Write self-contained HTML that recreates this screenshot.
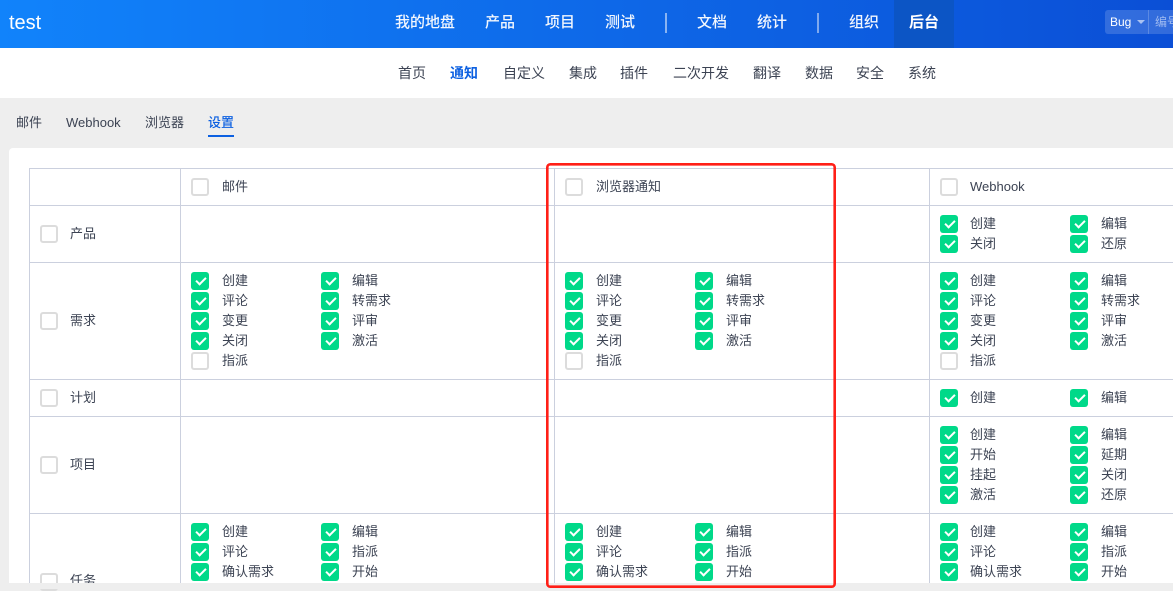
<!DOCTYPE html>
<html><head><meta charset="utf-8"><style>
*,*:before,*:after{box-sizing:border-box}
html,body{margin:0;padding:0}
body{width:1173px;height:589px;overflow:hidden;position:relative;background:#eee;font-family:"Liberation Sans","Noto Sans CJK SC",sans-serif;font-size:13px;color:#3c4353}
.abs,.n,.s,.t,.l,.g,.h,.v,.r{position:absolute}
#top{left:0;top:0;width:1173px;height:48px;background:linear-gradient(90deg,#1183fb,#0b4fd6)}
.n{top:12px;height:22px;line-height:22px;font-size:15px;font-weight:500;color:#fff;white-space:nowrap;opacity:.95}
.s{top:63px;height:20px;line-height:20px;font-size:14px;white-space:nowrap;color:#3c4353}
.t{top:113px;height:20px;line-height:20px;font-size:13px;white-space:nowrap;color:#3c4353}
.h{height:1px;background:#cbd0de;left:29px;width:1144px}
.v{width:1px;background:#cbd0de;top:168px;height:415px}
.l{white-space:nowrap;height:20px;line-height:20px}
.g{width:262px}
.g a{float:left;position:relative;width:130px;height:20px;line-height:19px;padding-left:31px;white-space:nowrap}
.g.w a:nth-child(odd){padding-left:30px}
.k:before,.u:before,.b{content:"";position:absolute;left:0;top:1px;width:18px;height:18px;border-radius:3px}
.k:before{background:#00d989}
.k:after{content:"";position:absolute;left:4.5px;top:5.5px;width:10px;height:6px;border-left:2px solid #fff;border-bottom:2px solid #fff;transform:rotate(-45deg)}
.u:before,.b{background:#fff;border:2px solid #dcdcdc}
.b{position:absolute;top:auto}
</style></head><body>
<div class="abs" id="top"></div>
<div class="abs" style="left:9px;top:9px;font-size:20px;line-height:28px;color:#fff">test</div>
<span class="n" style="left:395px">我的地盘</span>
<span class="n" style="left:485px">产品</span>
<span class="n" style="left:545px">项目</span>
<span class="n" style="left:605px">测试</span>
<div class="abs" style="left:665px;top:13px;width:2px;height:20px;background:#8ab4f2"></div>
<span class="n" style="left:697px">文档</span>
<span class="n" style="left:757px">统计</span>
<div class="abs" style="left:817px;top:13px;width:2px;height:20px;background:#7fa9ee"></div>
<span class="n" style="left:849px">组织</span>
<div class="abs" style="left:894px;top:0;width:60px;height:48px;background:#0c55c5"></div>
<span class="n" style="left:909px;font-weight:700;opacity:1">后台</span>
<div class="abs" style="left:1105px;top:10px;width:68px;height:24px;border-radius:3px 0 0 3px;background:rgba(255,255,255,.16)"></div>
<div class="abs" style="left:1148px;top:10px;width:1px;height:24px;background:rgba(255,255,255,.2)"></div>
<div class="abs" style="left:1110px;top:12px;font-size:12px;line-height:20px;color:#fff">Bug</div>
<div class="abs" style="left:1137px;top:20px;width:0;height:0;border-left:4px solid transparent;border-right:4px solid transparent;border-top:4px solid #a9c2f2"></div>
<div class="abs" style="left:1155px;top:12px;font-size:12px;line-height:20px;color:#9db9f0;white-space:nowrap">编号</div>

<div class="abs" style="left:0;top:48px;width:1173px;height:50px;background:#fff"></div>
<span class="s" style="left:398px">首页</span>
<span class="s" style="left:450px;color:#0c60e1;font-weight:700">通知</span>
<span class="s" style="left:503px">自定义</span>
<span class="s" style="left:569px">集成</span>
<span class="s" style="left:620px">插件</span>
<span class="s" style="left:673px">二次开发</span>
<span class="s" style="left:753px">翻译</span>
<span class="s" style="left:805px">数据</span>
<span class="s" style="left:856px">安全</span>
<span class="s" style="left:908px">系统</span>

<span class="t" style="left:16px">邮件</span>
<span class="t" style="left:66px">Webhook</span>
<span class="t" style="left:145px">浏览器</span>
<span class="t" style="left:208px;color:#0c60e1;font-weight:500">设置</span>
<div class="abs" style="left:208px;top:135px;width:26px;height:2px;background:#0c60e1"></div>

<div class="abs" style="left:9px;top:148px;width:1164px;height:435px;background:#fff;border-radius:4px 0 0 0"></div>

<div class="h" style="top:168px"></div>
<div class="h" style="top:205px"></div>
<div class="h" style="top:262px"></div>
<div class="h" style="top:379px"></div>
<div class="h" style="top:416px"></div>
<div class="h" style="top:513px"></div>
<div class="v" style="left:29px"></div>
<div class="v" style="left:180px"></div>
<div class="v" style="left:554px"></div>
<div class="v" style="left:929px"></div>

<div class="b" style="left:191px;top:178px"></div><span class="l" style="left:222px;top:177px">邮件</span>
<div class="b" style="left:565px;top:178px"></div><span class="l" style="left:596px;top:177px">浏览器通知</span>
<div class="b" style="left:940px;top:178px"></div><span class="l" style="left:970px;top:177px">Webhook</span>

<div class="b" style="left:40px;top:225px"></div><span class="l" style="left:70px;top:224px">产品</span>
<div class="b" style="left:40px;top:312px"></div><span class="l" style="left:70px;top:311px">需求</span>
<div class="b" style="left:40px;top:389px"></div><span class="l" style="left:70px;top:388px">计划</span>
<div class="b" style="left:40px;top:456px"></div><span class="l" style="left:70px;top:455px">项目</span>
<div class="b" style="left:40px;top:573px"></div><span class="l" style="left:70px;top:571px">任务</span>

<div class="g w" style="left:940px;top:214px"><a class="k">创建</a><a class="k">编辑</a><a class="k">关闭</a><a class="k">还原</a></div>

<div class="g" style="left:191px;top:271px"><a class="k">创建</a><a class="k">编辑</a><a class="k">评论</a><a class="k">转需求</a><a class="k">变更</a><a class="k">评审</a><a class="k">关闭</a><a class="k">激活</a><a class="u">指派</a></div>
<div class="g" style="left:565px;top:271px"><a class="k">创建</a><a class="k">编辑</a><a class="k">评论</a><a class="k">转需求</a><a class="k">变更</a><a class="k">评审</a><a class="k">关闭</a><a class="k">激活</a><a class="u">指派</a></div>
<div class="g w" style="left:940px;top:271px"><a class="k">创建</a><a class="k">编辑</a><a class="k">评论</a><a class="k">转需求</a><a class="k">变更</a><a class="k">评审</a><a class="k">关闭</a><a class="k">激活</a><a class="u">指派</a></div>

<div class="g w" style="left:940px;top:388px"><a class="k">创建</a><a class="k">编辑</a></div>

<div class="g w" style="left:940px;top:425px"><a class="k">创建</a><a class="k">编辑</a><a class="k">开始</a><a class="k">延期</a><a class="k">挂起</a><a class="k">关闭</a><a class="k">激活</a><a class="k">还原</a></div>

<div class="g" style="left:191px;top:522px"><a class="k">创建</a><a class="k">编辑</a><a class="k">评论</a><a class="k">指派</a><a class="k">确认需求</a><a class="k">开始</a></div>
<div class="g" style="left:565px;top:522px"><a class="k">创建</a><a class="k">编辑</a><a class="k">评论</a><a class="k">指派</a><a class="k">确认需求</a><a class="k">开始</a></div>
<div class="g w" style="left:940px;top:522px"><a class="k">创建</a><a class="k">编辑</a><a class="k">评论</a><a class="k">指派</a><a class="k">确认需求</a><a class="k">开始</a></div>

<div class="abs" style="left:0;top:583px;width:1173px;height:6px;background:#eee"></div>
<svg class="abs" style="left:0;top:0" width="1173" height="589"><rect x="547.3" y="164.3" width="287.4" height="422.4" rx="3" fill="none" stroke="#ff1f17" stroke-width="2.6"/></svg>
</body></html>
